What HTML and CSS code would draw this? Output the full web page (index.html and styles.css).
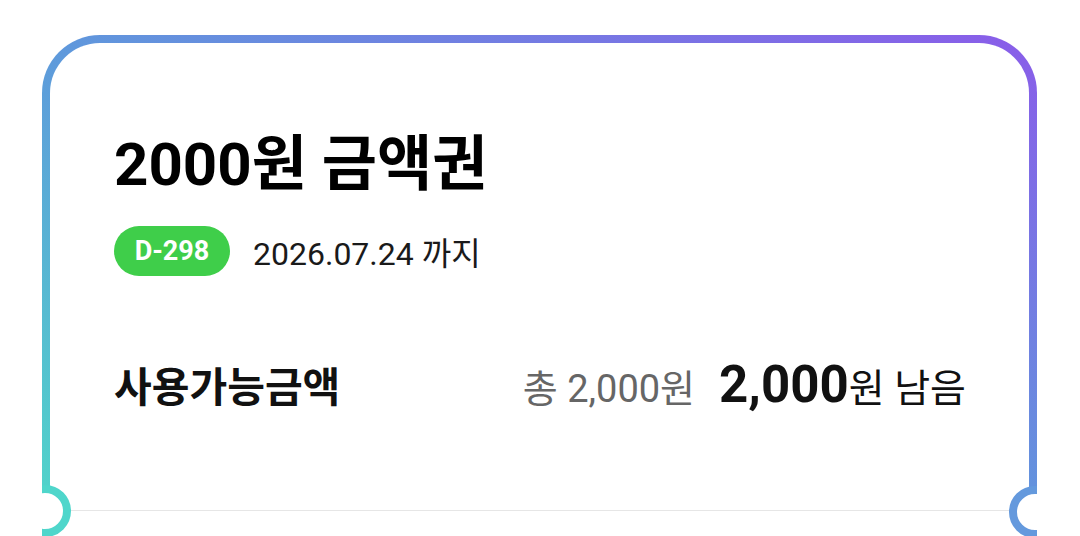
FILE: index.html
```html
<!DOCTYPE html>
<html lang="ko">
<head>
<meta charset="utf-8">
<title>2000원 금액권</title>
<link rel="stylesheet" href="styles.css">
</head>
<body>
<div class="ticket">
  <div class="ticket-inner">
    <div class="content">
      <h1 class="title">2000원 금액권</h1>
      <div class="expiry">
        <span class="badge">D-298</span>
        <span class="date">2026.07.24 까지</span>
      </div>
      <div class="amount-row">
        <span class="amount-label">사용가능금액</span>
        <span class="amount-values">
          <span class="total">총 2,000원</span>
          <span class="remain"><b class="remain-num">2,000</b>원 남음</span>
        </span>
      </div>
    </div>
    <div class="divider"></div>
  </div>
  <span class="notch notch-left"></span>
  <span class="notch notch-right"></span>
</div>
</body>
</html>
```

FILE: styles.css
```css
html, body {
  margin: 0;
  padding: 0;
  background: #ffffff;
  overflow: hidden;
}

body {
  font-family: Roboto, "Noto Sans CJK KR", sans-serif;
  color: #111111;
}

.ticket {
  position: relative;
  margin: 35px 43px 0 42px;
  height: 501px;
  padding: 8px 8px 0 8px;
  box-sizing: border-box;
  border-radius: 58px 58px 0 0;
  background: linear-gradient(to top right, #4fd8c8 0%, #5f98dc 50%, #8a5ce9 100%);
  overflow: hidden;
}

.ticket-inner {
  height: 100%;
  background: #ffffff;
  border-radius: 50px 50px 0 0;
  display: flex;
  flex-direction: column;
}

.content {
  padding: 86px 63px 0 64px;
  display: flex;
  flex-direction: column;
}

.title {
  margin: 0;
  font-size: 60px;
  font-weight: 700;
  line-height: 71px;
  color: #000000;
}

.expiry {
  margin-top: 26px;
  display: flex;
  align-items: center;
  gap: 23px;
}

.badge {
  display: inline-flex;
  align-items: center;
  justify-content: center;
  width: 116px;
  height: 50px;
  box-sizing: border-box;
  border-radius: 25px;
  background: #3fce4a;
  color: #ffffff;
  font-size: 27px;
  font-weight: 700;
}

.date {
  font-size: 32px;
  color: #1a1a1a;
}

.amount-row {
  margin-top: 78px;
  display: flex;
  justify-content: space-between;
  align-items: baseline;
}

.amount-label {
  font-size: 41px;
  font-weight: 700;
  color: #111111;
}

.amount-values {
  display: flex;
  align-items: baseline;
  gap: 24px;
}

.total {
  font-size: 38px;
  color: #666666;
}

.remain {
  font-size: 39px;
  color: #111111;
}

.remain-num {
  font-size: 51px;
  font-weight: 700;
}

.divider {
  margin-top: auto;
  margin-bottom: 25px;
  height: 1px;
  background: #e6e6e6;
}

.notch {
  position: absolute;
  width: 52px;
  height: 52px;
  box-sizing: border-box;
  border-radius: 50%;
  background: #ffffff;
  border: 8px solid #4fd6cb;
  top: 450px;
}

.notch-left {
  left: -23px;
  border-color: #4fd6cb;
}

.notch-right {
  right: -24px;
  top: 451px;
  border-color: #6499dd;
}
```
